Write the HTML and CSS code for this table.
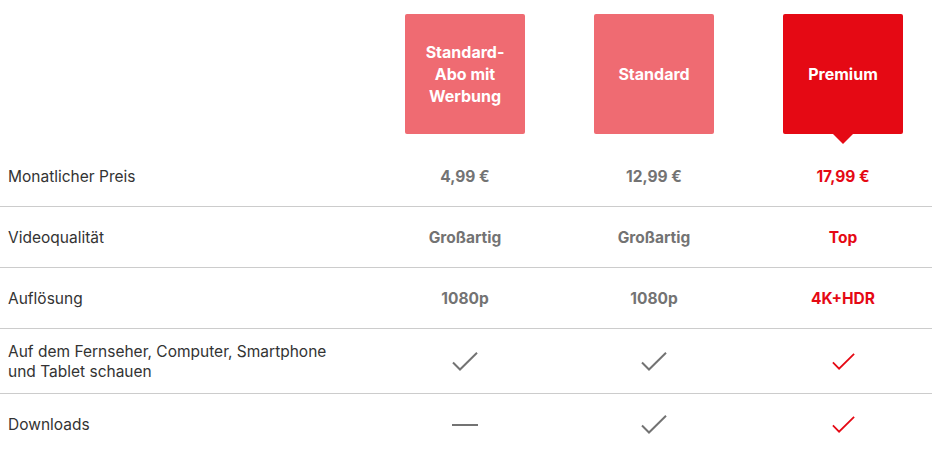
FILE: index.html
```html
<!DOCTYPE html>
<html lang="de">
<head>
<meta charset="utf-8">
<link rel="stylesheet" href="styles.css">
</head>
<body>
<div class="table">
  <div class="head">
    <div class="label-cell"></div>
    <div class="plan-cell"><div class="plan-box">Standard-<br>Abo mit<br>Werbung</div></div>
    <div class="plan-cell"><div class="plan-box">Standard</div></div>
    <div class="plan-cell"><div class="plan-box selected">Premium</div></div>
  </div>

  <div class="row">
    <div class="label-cell">Monatlicher Preis</div>
    <div class="value-cell">4,99&nbsp;€</div>
    <div class="value-cell">12,99&nbsp;€</div>
    <div class="value-cell selected">17,99&nbsp;€</div>
  </div>
  <div class="row">
    <div class="label-cell">Videoqualität</div>
    <div class="value-cell">Großartig</div>
    <div class="value-cell">Großartig</div>
    <div class="value-cell selected">Top</div>
  </div>
  <div class="row">
    <div class="label-cell">Auflösung</div>
    <div class="value-cell">1080p</div>
    <div class="value-cell">1080p</div>
    <div class="value-cell selected">4K+HDR</div>
  </div>
  <div class="row">
    <div class="label-cell">Auf dem Fernseher, Computer, Smartphone<br>und Tablet schauen</div>
    <div class="value-cell"><svg class="check" viewBox="0 0 26 20" width="26" height="20"><polyline points="1,10.5 8,17.5 25,0.8"/></svg></div>
    <div class="value-cell"><svg class="check" viewBox="0 0 26 20" width="26" height="20"><polyline points="1,10.5 8,17.5 25,0.8"/></svg></div>
    <div class="value-cell selected"><svg class="check" viewBox="0 0 26 20" width="26" height="20"><polyline points="1,10.5 8,17.5 25,0.8"/></svg></div>
  </div>
  <div class="row last">
    <div class="label-cell">Downloads</div>
    <div class="value-cell"><span class="dash"></span></div>
    <div class="value-cell"><svg class="check" viewBox="0 0 26 20" width="26" height="20"><polyline points="1,10.5 8,17.5 25,0.8"/></svg></div>
    <div class="value-cell selected"><svg class="check" viewBox="0 0 26 20" width="26" height="20"><polyline points="1,10.5 8,17.5 25,0.8"/></svg></div>
  </div>
</div>
</body>
</html>
```
FILE: styles.css
```css
html, body {
  margin: 0;
  padding: 0;
  background: #fff;
}
body {
  font-family: Inter, Roboto, "Liberation Sans", Arial, sans-serif;
  color: #333;
  overflow: hidden;
}
.table {
  width: 932px;
}
.head, .row {
  display: grid;
  grid-template-columns: 1fr 189px 189px 189px;
}
.head {
  padding-top: 14px;
  height: 132px;
}
.plan-cell {
  display: flex;
  justify-content: center;
  padding-left: 11px;
}
.plan-box {
  position: relative;
  width: 120px;
  height: 120px;
  box-sizing: border-box;
  border-radius: 2px;
  background: #ef6b72;
  color: #fff;
  font-weight: 700;
  font-size: 16px;
  line-height: 22px;
  display: flex;
  align-items: center;
  justify-content: center;
  text-align: center;
}
.plan-box.selected {
  background: #e50914;
}
.plan-box.selected::after {
  content: "";
  position: absolute;
  left: 50%;
  top: 100%;
  margin-left: -10px;
  border-left: 10px solid transparent;
  border-right: 10px solid transparent;
  border-top: 10px solid #e50914;
}
.row {
  min-height: 60px;
  border-bottom: 1px solid #ccc;
  font-size: 15.5px;
  line-height: 20px;
}
.row.last {
  border-bottom: none;
}
.row .label-cell {
  padding: 13px 0 11px 8px;
  display: flex;
  align-items: center;
}
.value-cell {
  display: flex;
  align-items: center;
  justify-content: center;
  padding-left: 11px;
  padding-top: 2px;
  font-size: 15.5px;
  font-weight: 700;
  color: #737373;
}
.value-cell.selected {
  color: #e50914;
}
.check {
  display: block;
  fill: none;
  stroke: currentColor;
  stroke-width: 2;
}
.value-cell.selected .check {
  width: 23px;
  height: 18px;
}
.dash {
  display: block;
  width: 26px;
  height: 2px;
  background: #737373;
}
```
